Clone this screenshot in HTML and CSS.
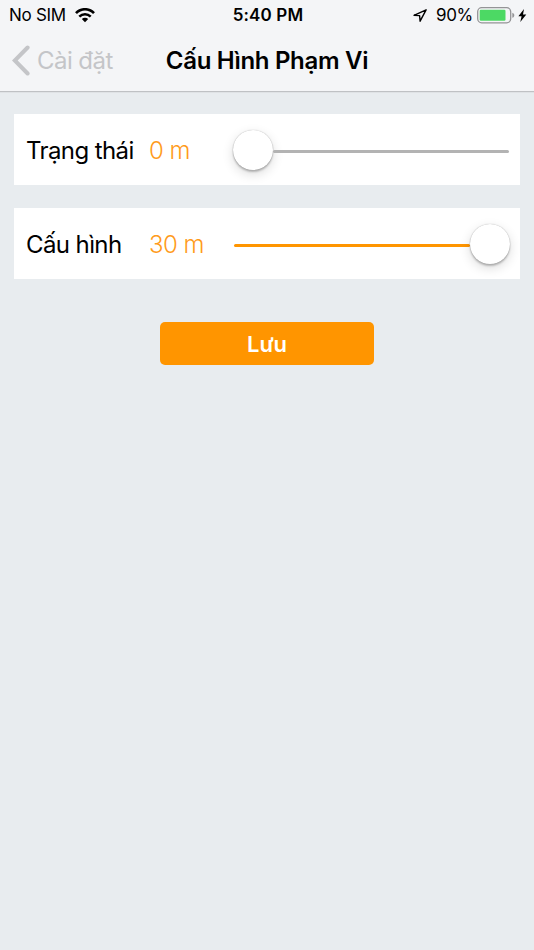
FILE: index.html
```html
<!DOCTYPE html>
<html lang="vi">
<head>
    <meta charset="UTF-8">
    <title>Cấu Hình Phạm Vi</title>
    <link rel="stylesheet" href="styles.css">
</head>
<body>
    <div class="header">
        <div class="status">
            <div class="left">
                <span class="sim">No SIM</span>
                <svg class="wifi" width="20" height="15" viewBox="0 0 20 15">
                    <path d="M1 5.2C6-.1 14-.1 19 5.2" fill="none" stroke="#000" stroke-width="2.6"/>
                    <path d="M4.3 8.6c3.2-3.3 8.2-3.3 11.4 0" fill="none" stroke="#000" stroke-width="2.5"/>
                    <path d="M6.8 11.1c1.8-1.8 4.6-1.8 6.4 0L10 14.3z"/>
                </svg>
            </div>
            <span class="time">5:40 PM</span>
            <div class="right">
                <svg class="location" width="14" height="13" viewBox="0 0 14 13">
                    <path d="M13.1.8L1 6.3l5.6.3.5 5.6z" fill="none" stroke="#000" stroke-width="1.4" stroke-linejoin="round"/>
                </svg>
                <span class="percent">90%</span>
                <svg class="battery" width="38" height="17" viewBox="0 0 38 17">
                    <rect x=".7" y=".7" width="33" height="15.1" rx="4" fill="none" stroke="#949496" stroke-width="1.3"/>
                    <rect x="2.7" y="2.7" width="25.8" height="11" rx="1.2" fill="#4cd964"/>
                    <path d="M35.3 5.7c2.7.8 2.7 4.3 0 5.1z" fill="#949496"/>
                </svg>
                <svg class="bolt" width="9" height="13" viewBox="0 0 9 13">
                    <path d="M6 0L.4 7.2h3.2L2.3 13l6-7.6H5z"/>
                </svg>
            </div>
        </div>
        <div class="nav">
            <div class="back">
                <svg width="18" height="31" viewBox="0 0 18 31">
                    <path d="M15.6 2.5L2.8 15.5l12.8 13" fill="none" stroke="#c4c5c8" stroke-width="4" stroke-linecap="round"/>
                </svg>
                <span>Cài đặt</span>
            </div>
            <h1>Cấu Hình Phạm Vi</h1>
        </div>
    </div>
    <div class="content">
        <div class="row">
            <span class="label">Trạng thái</span>
            <span class="value">0 m</span>
            <div class="slider">
                <div class="thumb"></div>
                <div class="track"></div>
            </div>
        </div>
        <div class="row">
            <span class="label">Cấu hình</span>
            <span class="value">30 m</span>
            <div class="slider full">
                <div class="track"></div>
                <div class="thumb"></div>
            </div>
        </div>
        <button class="save">Lưu</button>
    </div>
</body>
</html>
```
FILE: styles.css
```css
*{margin:0; padding:0; box-sizing: border-box;}
body{
    height: 950px;
    background: #e8ecef;
    font-family: Inter, "Liberation Sans", sans-serif;
    color: #000;
    overflow: hidden;
}
svg{
    display: block;
}
.header{
    height: 92px;
    background: #f4f5f7;
    border-bottom: 1px solid #bfc1c4;
    box-shadow: 0 1px 0 #dfe2e5;
}
.status{
    display: grid;
    grid-template-columns: 1fr auto 1fr;
    align-items: center;
    height: 30px;
    padding: 0 7px 0 9px;
    font-size: 17px;
    line-height: 30px;
}
.left,
.right{
    display: flex;
    align-items: center;
}
.right{
    justify-content: flex-end;
}
.sim{
    letter-spacing: -0.3px;
}
.wifi{
    margin-left: 9px;
}
.time{
    font-weight: 600;
    letter-spacing: 0.15px;
}
.location{
    margin-right: 9px;
}
.percent{
    letter-spacing: -0.3px;
}
.battery{
    margin-left: 4px;
}
.bolt{
    margin-left: 3px;
}
.nav{
    display: grid;
    grid-template-columns: 1fr auto 1fr;
    align-items: center;
    height: 60px;
}
.back{
    display: flex;
    align-items: center;
    padding-left: 12px;
    font-size: 24px;
    color: #c4c5c8;
}
.back span{
    margin-left: 7px;
    letter-spacing: -0.55px;
}
.nav h1{
    font-size: 24px;
    font-weight: 600;
    letter-spacing: -0.3px;
}
.content{
    padding: 22px 14px 0 14px;
}
.row{
    display: flex;
    align-items: center;
    height: 71px;
    margin-bottom: 23px;
    padding-left: 12px;
    background: #fff;
    font-size: 24px;
}
.label,
.value{
    padding-top: 1px;
    white-space: nowrap;
}
.label{
    width: 123px;
    letter-spacing: -0.6px;
}
.value{
    width: 84px;
    color: #ff9b1a;
    font-weight: 300;
    letter-spacing: -0.5px;
}
.slider{
    display: flex;
    align-items: center;
    width: 276px;
}
.thumb{
    flex: none;
    width: 40px;
    height: 40px;
    border-radius: 50%;
    background: #fff;
    box-shadow: 0 0 1px rgba(0,0,0,.35), 0 2px 2px rgba(0,0,0,.22), 0 4px 12px rgba(0,0,0,.14);
}
.track{
    flex: 1;
    height: 3px;
    margin-top: 3px;
    border-radius: 2px;
    background: #b3b3b3;
}
.full{
    width: 277px;
    padding-left: 1px;
}
.full .track{
    background: #ff9500;
}
.save{
    display: block;
    width: 214px;
    height: 43px;
    margin: 43px 0 0 146px;
    border: 0;
    border-radius: 5px;
    background: #ff9500;
    color: #fff;
    font-family: inherit;
    font-size: 22px;
    font-weight: 600;
}
```
